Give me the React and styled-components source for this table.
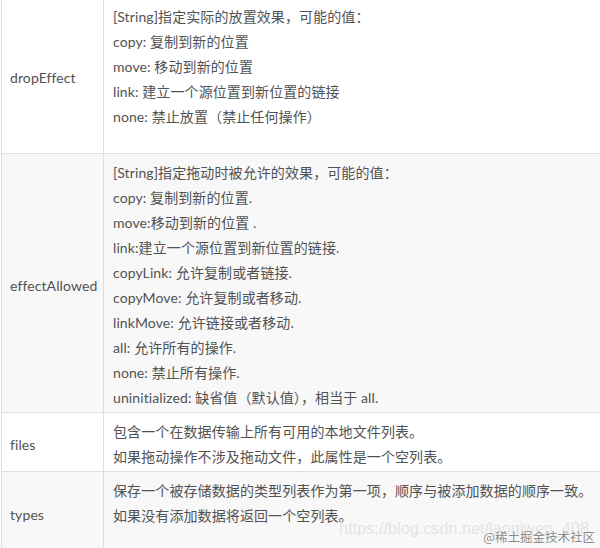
import React from "react";
import styled, { createGlobalStyle } from "styled-components";

const GlobalStyle = createGlobalStyle`
  html, body {
    margin: 0;
    padding: 0;
    background: #fff;
    overflow: hidden;
  }
`;

const Page = styled.div`
  position: relative;
  width: 600px;
  height: 548px;
  overflow: hidden;
`;

const Table = styled.table`
  border-collapse: collapse;
  width: 640px;
  margin: -3px 0 0 1px;
  table-layout: fixed;
  font-family: Lato, "Noto Sans CJK SC", sans-serif;
  font-size: 14px;
  letter-spacing: 0.1px;
  color: #525252;
`;

const Row = styled.tr`
  background: ${(p) => (p.$shaded ? "#f8f8f8" : "#fff")};
`;

const Cell = styled.td`
  border: 1px solid #dedede;
  padding: 6px 9px 2px;
  line-height: 25px;
  vertical-align: middle;
  white-space: nowrap;
  width: ${(p) => (p.$key ? "84px" : "auto")};
  padding-left: ${(p) => (p.$key ? "8px" : "9px")};
`;

const Line = styled.div`
  height: ${(p) => (p.$blank ? "22px" : "25px")};
`;

const Watermark = styled.div`
  position: absolute;
  right: 11px;
  bottom: 10px;
  font-family: "Liberation Sans", Arial, sans-serif;
  font-size: 16px;
  color: #e4e4e4;
  letter-spacing: 0.1px;
`;

const Brand = styled.div`
  position: absolute;
  right: 5px;
  bottom: 2px;
  font-family: "Noto Sans CJK SC", sans-serif;
  font-size: 12.5px;
  color: #8a8a8a;
  text-shadow: 0 0 2px #fff, 0 0 2px #fff;
`;

const rows = [
  {
    key: "dropEffect",
    lines: [
      "[String]指定实际的放置效果，可能的值：",
      "copy: 复制到新的位置",
      "move: 移动到新的位置",
      "link: 建立一个源位置到新位置的链接",
      "none: 禁止放置（禁止任何操作）",
      "",
    ],
  },
  {
    key: "effectAllowed",
    shaded: true,
    lines: [
      "[String]指定拖动时被允许的效果，可能的值：",
      "copy: 复制到新的位置.",
      "move:移动到新的位置 .",
      "link:建立一个源位置到新位置的链接.",
      "copyLink: 允许复制或者链接.",
      "copyMove: 允许复制或者移动.",
      "linkMove: 允许链接或者移动.",
      "all: 允许所有的操作.",
      "none: 禁止所有操作.",
      "uninitialized: 缺省值（默认值），相当于 all.",
    ],
  },
  {
    key: "files",
    lines: [
      "包含一个在数据传输上所有可用的本地文件列表。",
      "如果拖动操作不涉及拖动文件，此属性是一个空列表。",
    ],
  },
  {
    key: "types",
    shaded: true,
    lines: [
      "保存一个被存储数据的类型列表作为第一项，顺序与被添加数据的顺序一致。",
      "如果没有添加数据将返回一个空列表。",
      "",
    ],
  },
];

const App = () => (
  <Page>
    <GlobalStyle />
    <Table>
      <tbody>
        {rows.map((r) => (
          <Row key={r.key} $shaded={r.shaded}>
            <Cell $key>{r.key}</Cell>
            <Cell>
              {r.lines.map((l, i) => (
                <Line key={i} $blank={!l}>
                  {l}
                </Line>
              ))}
            </Cell>
          </Row>
        ))}
      </tbody>
    </Table>
    <Watermark>https://blog.csdn.net/laoqiwen_408</Watermark>
    <Brand>@稀土掘金技术社区</Brand>
  </Page>
);

export default App;
